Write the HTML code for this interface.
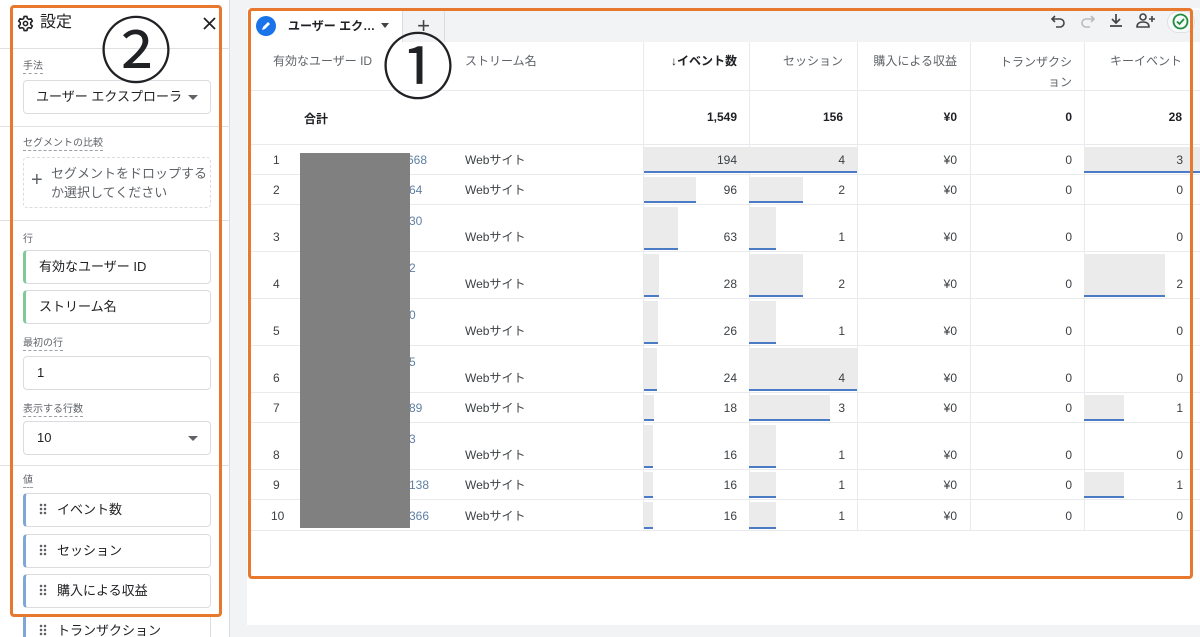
<!DOCTYPE html>
<html><head><meta charset="utf-8">
<style>
*{margin:0;padding:0;box-sizing:border-box}
html,body{width:1200px;height:637px;overflow:hidden}
body{background:#f1f3f4;font-family:"Liberation Sans","Noto Sans CJK JP",sans-serif;color:#202124;position:relative}
.a{position:absolute}
.lbl{position:absolute;font-size:10px;color:#5f6368;border-bottom:1px dashed #9aa0a6;line-height:13px}
.box{position:absolute;left:23px;width:188px;background:#fff;border:1px solid #dadce0;border-radius:4px;font-size:13px;line-height:32px;padding-left:13px}
.g{border-left:3px solid #81c995}
.b{border-left:3px solid #7fa7d6}
.hr{position:absolute;left:0;width:230px;height:1px;background:#e0e0e0}
.dots{display:inline-block;width:8px;height:12px;margin-right:10px;vertical-align:-1px;background:radial-gradient(circle,#5f6368 1.2px,transparent 1.4px) 0 0/4px 4px}
.caret{position:absolute;right:12px;top:14px;width:0;height:0;border-left:5px solid transparent;border-right:5px solid transparent;border-top:5px solid #5f6368}
.row{position:absolute;left:249px;width:951px;border-bottom:1px solid #e8eaed}
.c{position:absolute;font-size:12px;bottom:6px;line-height:16px;color:#3c4043}
.r{text-align:right}
.bar{position:absolute;background:#ebebeb;border-bottom:2px solid #4a7bc4;top:2px;bottom:1px}
.vl{position:absolute;top:42px;width:1px;height:489px;background:#e8eaed}
.h{position:absolute;font-size:12px;color:#5f6368;top:52px;line-height:18px}
.t{position:absolute;top:110px;font-size:12px;font-weight:bold;text-align:right}
</style></head><body>
<div class="a" style="left:0;top:0;width:230px;height:637px;background:#fff;border-right:1px solid #dadce0"></div>
<svg class="a" style="left:17px;top:15px" width="17" height="17" viewBox="0 0 24 24"><path fill="none" stroke="#202124" stroke-width="2.2" stroke-linejoin="round" d="M10 2h4l.6 3 2.2 1.2 2.9-1 2 3.4-2.3 2v2.8l2.3 2-2 3.4-2.9-1-2.2 1.2-.6 3h-4l-.6-3-2.2-1.2-2.9 1-2-3.4 2.3-2V10.6l-2.3-2 2-3.4 2.9 1L9.4 5z"/><circle cx="12" cy="12" r="3" fill="none" stroke="#202124" stroke-width="2.2"/></svg>
<div class="a" style="left:40px;top:13px;font-size:16px;line-height:20px">設定</div>
<svg class="a" style="left:203px;top:17px" width="13" height="13" viewBox="0 0 13 13"><path d="M1 1L12 12M12 1L1 12" stroke="#202124" stroke-width="1.8"/></svg>
<div class="hr" style="top:48px"></div>
<div class="lbl" style="left:23px;top:60px">手法</div>
<div class="box" style="top:80px;height:34px;padding-left:12px">ユーザー エクスプローラ<span class="caret"></span></div>
<div class="hr" style="top:126px"></div>
<div class="lbl" style="left:23px;top:137px">セグメントの比較</div>
<div class="a" style="left:23px;top:157px;width:188px;height:51px;border:1px dashed #dadce0;border-radius:4px"></div>
<div class="a" style="left:31px;top:168px;font-size:20px;color:#5f6368;line-height:24px">+</div>
<div class="a" style="left:51px;top:164px;font-size:13px;line-height:19px;color:#5f6368">セグメントをドロップする<br>か選択してください</div>
<div class="hr" style="top:220px"></div>
<div class="a" style="left:23px;top:230px;font-size:10px;color:#5f6368">行</div>
<div class="box g" style="top:250px;height:34px">有効なユーザー ID</div>
<div class="box g" style="top:290px;height:34px">ストリーム名</div>
<div class="lbl" style="left:23px;top:337px">最初の行</div>
<div class="box" style="top:356px;height:34px">1</div>
<div class="lbl" style="left:23px;top:403px">表示する行数</div>
<div class="box" style="top:421px;height:34px">10<span class="caret"></span></div>
<div class="hr" style="top:465px"></div>
<div class="lbl" style="left:23px;top:474px">値</div>
<div class="box b" style="top:493px;height:34px"><span class="dots"></span>イベント数</div>
<div class="box b" style="top:534px;height:34px"><span class="dots"></span>セッション</div>
<div class="box b" style="top:574px;height:34px"><span class="dots"></span>購入による収益</div>
<div class="box b" style="top:614px;height:34px"><span class="dots"></span>トランザクション</div>
<div class="a" style="left:10px;top:5px;width:212px;height:612px;border:3px solid #e8782d;border-radius:4px"></div>
<div class="a" style="left:100px;top:6px;font-size:72px;line-height:80px;font-family:'Noto Sans CJK JP',sans-serif">②</div>

<div class="a" style="left:247px;top:8px;width:953px;height:617px;background:#fff"></div>
<div class="a" style="left:249px;top:10px;width:951px;height:32px;background:#f1f3f4"></div>
<div class="a" style="left:250px;top:10px;width:153px;height:32px;background:#fff;border-right:1px solid #dadce0"></div>
<div class="a" style="left:403px;top:10px;width:42px;height:32px;border-right:1px solid #dadce0;font-size:22px;line-height:32px;text-align:center;color:#444">+</div>
<div class="a" style="left:256px;top:16px;width:20px;height:20px;border-radius:50%;background:#1a73e8"></div>
<svg class="a" style="left:260px;top:20px" width="12" height="12" viewBox="0 0 12 12"><path d="M2 10l1-3 5-5 2 2-5 5z" fill="#fff"/></svg>
<div class="a" style="left:288px;top:18px;font-size:12px;font-weight:bold;line-height:16px">ユーザー エク…</div>
<div class="a" style="left:381px;top:23px;border-left:4px solid transparent;border-right:4px solid transparent;border-top:5px solid #444"></div>
<svg class="a" style="left:1050px;top:13px" width="16" height="16" viewBox="0 0 16 16"><path d="M5 3L2 6l3 3M2 6h8a4 4 0 0 1 0 8H6" fill="none" stroke="#444" stroke-width="1.6"/></svg>
<svg class="a" style="left:1080px;top:13px" width="16" height="16" viewBox="0 0 16 16"><path d="M11 3l3 3-3 3M14 6H6a4 4 0 0 0 0 8h4" fill="none" stroke="#bbb" stroke-width="1.6"/></svg>
<svg class="a" style="left:1108px;top:12px" width="16" height="16" viewBox="0 0 16 16"><path d="M8 2v9M4 7l4 4 4-4M2 14h12" fill="none" stroke="#444" stroke-width="1.7"/></svg>
<svg class="a" style="left:1136px;top:12px" width="20" height="16" viewBox="0 0 20 16"><circle cx="7" cy="5" r="3" fill="none" stroke="#444" stroke-width="1.6"/><path d="M1 15c0-4 3-5 6-5s6 1 6 5z" fill="none" stroke="#444" stroke-width="1.6"/><path d="M16 4v6M13 7h6" stroke="#444" stroke-width="1.6"/></svg>
<div class="a" style="left:1167px;top:11px;width:28px;height:22px;border-radius:11px;background:#f8f9fa;border:1px solid #e0e0e0"></div>
<svg class="a" style="left:1172px;top:13px" width="17" height="17" viewBox="0 0 17 17"><circle cx="8.5" cy="8.5" r="7" fill="none" stroke="#1e8e3e" stroke-width="1.8"/><path d="M5 8.5l2.5 2.5 4.5-5" fill="none" stroke="#1e8e3e" stroke-width="1.8"/></svg>

<div class="h" style="left:273px">有効なユーザー ID</div>
<div class="h" style="left:465px">ストリーム名</div>
<div class="h r" style="left:650px;width:87px;color:#202124;font-weight:bold">↓イベント数</div>
<div class="h r" style="left:750px;width:93px">セッション</div>
<div class="h r" style="left:858px;width:99px">購入による収益</div>
<div class="h r" style="left:980px;width:92px;line-height:20px">トランザクシ<br>ョン</div>
<div class="h r" style="left:1090px;width:92px">キーイベント</div>
<div class="a" style="left:249px;top:90px;width:951px;height:1px;background:#e8eaed"></div>
<div class="a" style="left:304px;top:110px;font-size:12px;font-weight:bold">合計</div>
<div class="t" style="left:650px;width:87px">1,549</div>
<div class="t" style="left:760px;width:83px">156</div>
<div class="t" style="left:860px;width:97px">¥0</div>
<div class="t" style="left:980px;width:92px">0</div>
<div class="t" style="left:1090px;width:92px">28</div>
<div class="a" style="left:249px;top:144px;width:951px;height:1px;background:#e8eaed"></div>

<div class="vl" style="left:643px"></div><div class="vl" style="left:749px"></div><div class="vl" style="left:857px"></div><div class="vl" style="left:970px"></div><div class="vl" style="left:1084px"></div>

<div class="row" style="top:145px;height:30px"><div class="bar" style="left:395px;width:105px"></div><div class="bar" style="left:500px;width:108px"></div><div class="bar" style="left:835px;width:116px"></div><div class="c" style="left:24px">1</div><div class="c" style="left:158px;color:#5f7fa3">668</div><div class="c" style="left:216px">Webサイト</div><div class="c r" style="left:400px;width:88px">194</div><div class="c r" style="left:510px;width:86px">4</div><div class="c r" style="left:610px;width:98px">¥0</div><div class="c r" style="left:730px;width:93px">0</div><div class="c r" style="left:840px;width:94px">3</div></div>
<div class="row" style="top:175px;height:30px"><div class="bar" style="left:395px;width:52px"></div><div class="bar" style="left:500px;width:54px"></div><div class="c" style="left:24px">2</div><div class="c" style="left:160px;color:#5f7fa3">64</div><div class="c" style="left:216px">Webサイト</div><div class="c r" style="left:400px;width:88px">96</div><div class="c r" style="left:510px;width:86px">2</div><div class="c r" style="left:610px;width:98px">¥0</div><div class="c r" style="left:730px;width:93px">0</div><div class="c r" style="left:840px;width:94px">0</div></div>
<div class="row" style="top:205px;height:47px"><div class="bar" style="left:395px;width:34px"></div><div class="bar" style="left:500px;width:27px"></div><div class="c" style="left:24px">3</div><div class="c" style="left:160px;top:8px;bottom:auto;color:#5f7fa3">30</div><div class="c" style="left:216px">Webサイト</div><div class="c r" style="left:400px;width:88px">63</div><div class="c r" style="left:510px;width:86px">1</div><div class="c r" style="left:610px;width:98px">¥0</div><div class="c r" style="left:730px;width:93px">0</div><div class="c r" style="left:840px;width:94px">0</div></div>
<div class="row" style="top:252px;height:47px"><div class="bar" style="left:395px;width:15px"></div><div class="bar" style="left:500px;width:54px"></div><div class="bar" style="left:835px;width:81px"></div><div class="c" style="left:24px">4</div><div class="c" style="left:160px;top:8px;bottom:auto;color:#5f7fa3">2</div><div class="c" style="left:216px">Webサイト</div><div class="c r" style="left:400px;width:88px">28</div><div class="c r" style="left:510px;width:86px">2</div><div class="c r" style="left:610px;width:98px">¥0</div><div class="c r" style="left:730px;width:93px">0</div><div class="c r" style="left:840px;width:94px">2</div></div>
<div class="row" style="top:299px;height:47px"><div class="bar" style="left:395px;width:14px"></div><div class="bar" style="left:500px;width:27px"></div><div class="c" style="left:24px">5</div><div class="c" style="left:160px;top:8px;bottom:auto;color:#5f7fa3">0</div><div class="c" style="left:216px">Webサイト</div><div class="c r" style="left:400px;width:88px">26</div><div class="c r" style="left:510px;width:86px">1</div><div class="c r" style="left:610px;width:98px">¥0</div><div class="c r" style="left:730px;width:93px">0</div><div class="c r" style="left:840px;width:94px">0</div></div>
<div class="row" style="top:346px;height:47px"><div class="bar" style="left:395px;width:13px"></div><div class="bar" style="left:500px;width:108px"></div><div class="c" style="left:24px">6</div><div class="c" style="left:160px;top:8px;bottom:auto;color:#5f7fa3">5</div><div class="c" style="left:216px">Webサイト</div><div class="c r" style="left:400px;width:88px">24</div><div class="c r" style="left:510px;width:86px">4</div><div class="c r" style="left:610px;width:98px">¥0</div><div class="c r" style="left:730px;width:93px">0</div><div class="c r" style="left:840px;width:94px">0</div></div>
<div class="row" style="top:393px;height:30px"><div class="bar" style="left:395px;width:10px"></div><div class="bar" style="left:500px;width:81px"></div><div class="bar" style="left:835px;width:40px"></div><div class="c" style="left:24px">7</div><div class="c" style="left:160px;color:#5f7fa3">89</div><div class="c" style="left:216px">Webサイト</div><div class="c r" style="left:400px;width:88px">18</div><div class="c r" style="left:510px;width:86px">3</div><div class="c r" style="left:610px;width:98px">¥0</div><div class="c r" style="left:730px;width:93px">0</div><div class="c r" style="left:840px;width:94px">1</div></div>
<div class="row" style="top:423px;height:47px"><div class="bar" style="left:395px;width:9px"></div><div class="bar" style="left:500px;width:27px"></div><div class="c" style="left:24px">8</div><div class="c" style="left:160px;top:8px;bottom:auto;color:#5f7fa3">3</div><div class="c" style="left:216px">Webサイト</div><div class="c r" style="left:400px;width:88px">16</div><div class="c r" style="left:510px;width:86px">1</div><div class="c r" style="left:610px;width:98px">¥0</div><div class="c r" style="left:730px;width:93px">0</div><div class="c r" style="left:840px;width:94px">0</div></div>
<div class="row" style="top:470px;height:30px"><div class="bar" style="left:395px;width:9px"></div><div class="bar" style="left:500px;width:27px"></div><div class="bar" style="left:835px;width:40px"></div><div class="c" style="left:24px">9</div><div class="c" style="left:160px;color:#5f7fa3">138</div><div class="c" style="left:216px">Webサイト</div><div class="c r" style="left:400px;width:88px">16</div><div class="c r" style="left:510px;width:86px">1</div><div class="c r" style="left:610px;width:98px">¥0</div><div class="c r" style="left:730px;width:93px">0</div><div class="c r" style="left:840px;width:94px">1</div></div>
<div class="row" style="top:500px;height:31px"><div class="bar" style="left:395px;width:9px"></div><div class="bar" style="left:500px;width:27px"></div><div class="c" style="left:22px">10</div><div class="c" style="left:160px;color:#5f7fa3">366</div><div class="c" style="left:216px">Webサイト</div><div class="c r" style="left:400px;width:88px">16</div><div class="c r" style="left:510px;width:86px">1</div><div class="c r" style="left:610px;width:98px">¥0</div><div class="c r" style="left:730px;width:93px">0</div><div class="c r" style="left:840px;width:94px">0</div></div>

<div class="a" style="left:300px;top:153px;width:110px;height:375px;background:#808080"></div>
<div class="a" style="left:248px;top:8px;width:945px;height:571px;border:3px solid #e8782d;border-radius:4px"></div>
<div class="a" style="left:382px;top:22px;font-size:72px;line-height:80px;font-family:'Noto Sans CJK JP',sans-serif">①</div>
</body></html>
